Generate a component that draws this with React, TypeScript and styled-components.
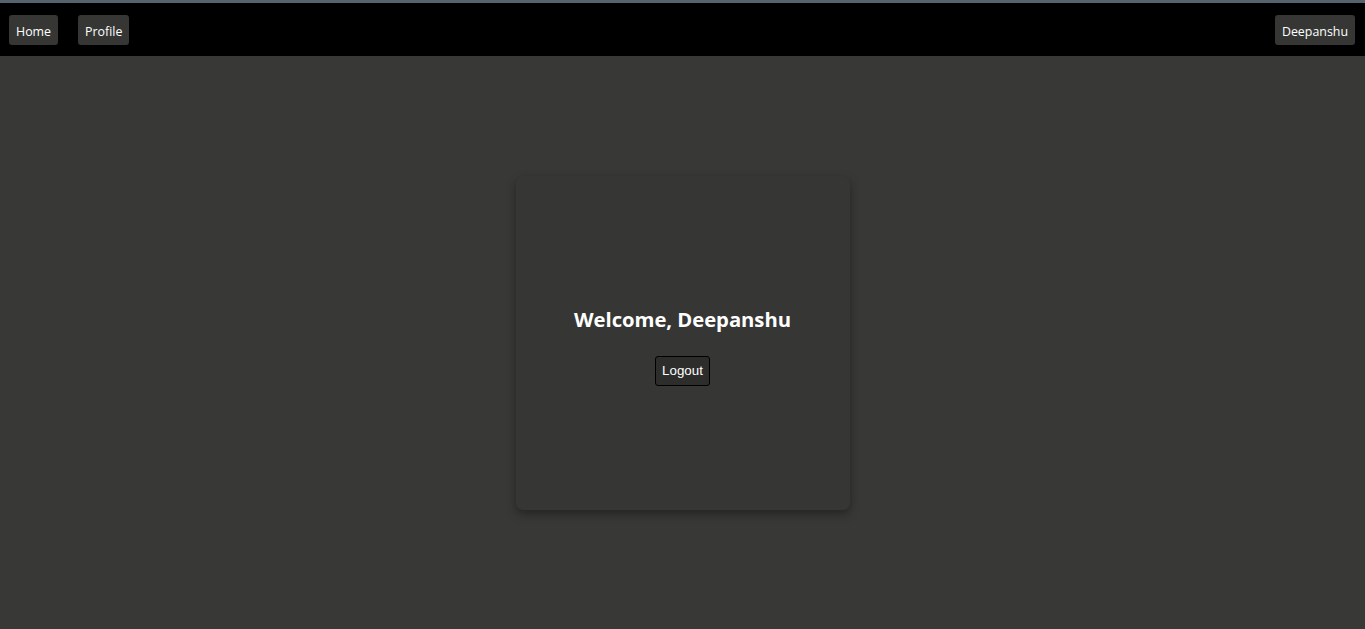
import React from "react";
import styled, { createGlobalStyle } from "styled-components";

const Global = createGlobalStyle`
  html, body { margin: 0; padding: 0; height: 100%; }
  body { background: #383836; font-family: "Open Sans", "Noto Sans", sans-serif; }
  #root { min-height: 100vh; }
`;

const Page = styled.div`
  display: flex;
  flex-direction: column;
  height: 100vh;
  border-top: 3px solid #56626c;
  box-sizing: border-box;
`;

const Nav = styled.nav`
  display: flex;
  align-items: center;
  height: 53px;
  padding: 0 10px 0 9px;
  background: #000;
  gap: 20px;
  flex-shrink: 0;
`;

const Spacer = styled.div`
  flex: 1;
`;

const NavButton = styled.button`
  height: 30px;
  padding: 2px 7px 0;
  margin-top: 1px;
  background: #363735;
  color: #fff;
  border: none;
  border-radius: 3px;
  font-family: "Open Sans", "Noto Sans", sans-serif;
  font-size: 12.4px;
  cursor: pointer;
`;

const Main = styled.main`
  flex: 1;
  display: flex;
  align-items: center;
  justify-content: center;
`;

const Card = styled.section`
  width: 334px;
  height: 334px;
  background: #363634;
  border-radius: 7px;
  box-shadow: 0 4px 10px rgba(0, 0, 0, 0.35);
  display: flex;
  flex-direction: column;
  align-items: center;
  justify-content: center;
  gap: 23px;
  box-sizing: border-box;
  padding-top: 5px;
`;

const Heading = styled.h2`
  margin: 0;
  color: #fff;
  font-family: "Open Sans", "Noto Sans", sans-serif;
  font-weight: 700;
  font-size: 20.3px;
  letter-spacing: -0.05px;
`;

const LogoutButton = styled.button`
  height: 30px;
  padding: 0 6px;
  background: #2d2d2b;
  color: #fff;
  border: 1px solid #000;
  border-radius: 3px;
  font-family: "Liberation Sans", Arial, sans-serif;
  font-size: 13.33px;
  font-weight: 400;
  cursor: pointer;
`;

export default function App() {
  return (
    <>
      <Global />
      <Page>
        <Nav>
          <NavButton>Home</NavButton>
          <NavButton>Profile</NavButton>
          <Spacer />
          <NavButton>Deepanshu</NavButton>
        </Nav>
        <Main>
          <Card>
            <Heading>Welcome, Deepanshu</Heading>
            <LogoutButton>Logout</LogoutButton>
          </Card>
        </Main>
      </Page>
    </>
  );
}
